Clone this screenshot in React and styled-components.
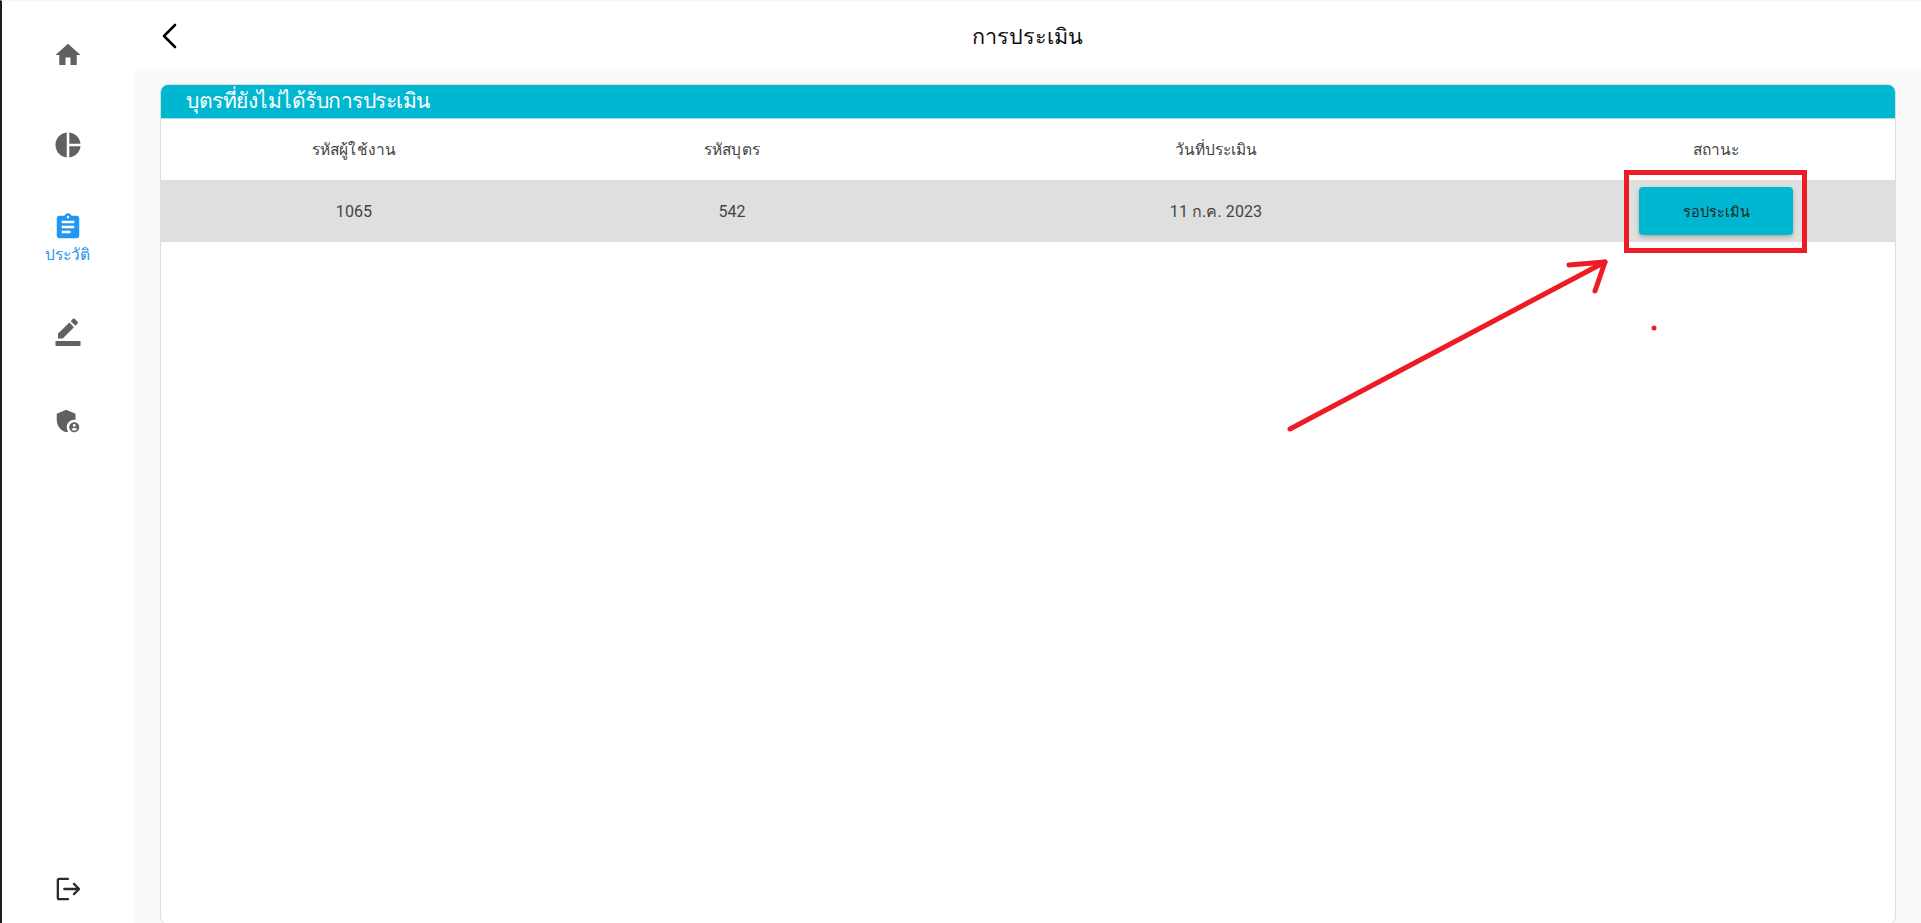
import React from 'react'
import styled, { createGlobalStyle } from 'styled-components'
import {
  MdHome,
  MdPieChart,
  MdAssignment,
  MdBorderColor,
  MdAdminPanelSettings,
} from 'react-icons/md'

const GlobalStyle = createGlobalStyle`
  html, body {
    margin: 0;
    padding: 0;
    height: 100%;
    overflow: hidden;
    background: #fff;
    font-family: Roboto, "Noto Sans", sans-serif;
  }
`

const Page = styled.div`
  position: relative;
  display: flex;
  box-sizing: border-box;
  height: 923px;
  border-left: 2px solid #1c1c1c;
  border-top: 1px solid #f6f6f6;
  overflow: hidden;
`

const Sidebar = styled.nav`
  width: 133px;
  flex-shrink: 0;
  display: flex;
  flex-direction: column;
  padding: 9px 2px 0 0;
  box-sizing: border-box;
  background: #fff;
`

const NavItem = styled.div`
  box-sizing: border-box;
  height: ${(p) => (p.$active ? '96px' : '90px')};
  padding-top: ${(p) => (p.$active ? '2px' : '0')};
  display: flex;
  flex-direction: column;
  align-items: center;
  justify-content: center;
  color: ${(p) => (p.$active ? '#2196f3' : '#616161')};
`

const NavLabel = styled.span`
  margin-top: 1px;
  font-size: 15.500px;
  font-weight: 300;
  line-height: 24px;
`

const LogoutItem = styled.div`
  margin-top: auto;
  height: 46px;
  display: flex;
  justify-content: center;
  color: #2b2b2b;
`

const Main = styled.div`
  flex: 1;
  min-width: 0;
  display: flex;
  flex-direction: column;
`

const Header = styled.header`
  height: 70px;
  flex-shrink: 0;
  display: grid;
  grid-template-columns: 1fr auto 1fr;
  align-items: center;
  background: #fff;
`

const BackButton = styled.button`
  justify-self: start;
  margin-left: 26px;
  padding: 0;
  border: 0;
  background: none;
  display: flex;
  color: #000;
`

const Title = styled.h1`
  margin: 0 2px 0 0;
  font-size: 21.600px;
  font-weight: 300;
  color: #111;
`

const Content = styled.main`
  flex: 1;
  min-height: 0;
  display: flex;
  flex-direction: column;
  padding: 13px 25px 0;
  background: #fafafa;
`

const Card = styled.section`
  flex: 1;
  margin-bottom: -2px;
  border: 1px solid #dcdcdc;
  border-radius: 8px;
  background: #fff;
  overflow: hidden;
`

const CardTitle = styled.div`
  height: 33px;
  padding-left: 25px;
  background: #00b7d1;
  border-bottom: 1px solid #9fe0ea;
  color: #fff;
  font-size: 21px;
  font-weight: 300;
  letter-spacing: -0.5px;
  line-height: 32px;
`

const Row = styled.div`
  display: grid;
  grid-template-columns: 386px 370px 598px 1fr;
  align-items: center;
  height: ${(p) => (p.$head ? '61px' : '62px')};
  background: ${(p) => (p.$shaded ? '#dfdfdf' : '#fff')};
  color: #444;
  font-size: ${(p) => (p.$head ? '15.500px' : '16px')};
  font-weight: ${(p) => (p.$head ? 300 : 400)};
  letter-spacing: 0.005em;
`

const Cell = styled.div`
  text-align: center;
  &:last-child {
    padding-left: 22px;
  }
`

const StatusButton = styled.button`
  width: 154px;
  height: 48px;
  border: 0;
  border-radius: 4px;
  background: #00b7d1;
  color: #222;
  font-family: inherit;
  font-size: 14.500px;
  font-weight: 300;
  box-shadow: 0 2px 4px rgba(0, 0, 0, 0.25);
`

const RedBox = styled.div`
  position: absolute;
  left: 1622px;
  top: 169px;
  width: 183px;
  height: 83px;
  box-sizing: border-box;
  border: 5px solid #ed1c24;
`

const Scribble = styled.svg`
  position: absolute;
  left: -2px;
  top: -1px;
  pointer-events: none;
`

export default function App() {
  return (
    <>
      <GlobalStyle />
      <Page>
        <Sidebar>
          <NavItem>
            <MdHome size={30} />
          </NavItem>
          <NavItem>
            <MdPieChart size={30} />
          </NavItem>
          <NavItem $active>
            <MdAssignment size={30} />
            <NavLabel>ประวัติ</NavLabel>
          </NavItem>
          <NavItem>
            <MdBorderColor size={30} />
          </NavItem>
          <NavItem>
            <MdAdminPanelSettings size={30} />
          </NavItem>
          <LogoutItem>
            <svg width="24" height="24" viewBox="0 0 26 26" fill="none" stroke="currentColor" strokeWidth="2.500" strokeLinecap="round" strokeLinejoin="round">
              <path d="M13 2H3.500a1.500 1.500 0 0 0-1.500 1.500v19A1.500 1.500 0 0 0 3.500 24H13" />
              <path d="M9 13h16M19.500 7.500 25 13l-5.500 5.500" />
            </svg>
          </LogoutItem>
        </Sidebar>
        <Main>
          <Header>
            <BackButton>
              <svg width="16" height="26" viewBox="0 0 16 26" fill="none" stroke="currentColor" strokeWidth="2.600" strokeLinecap="round" strokeLinejoin="round">
                <path d="M14 2 3 13l11 11" />
              </svg>
            </BackButton>
            <Title>การประเมิน</Title>
          </Header>
          <Content>
            <Card>
              <CardTitle>บุตรที่ยังไม่ได้รับการประเมิน</CardTitle>
              <Row $head>
                <Cell>รหัสผู้ใช้งาน</Cell>
                <Cell>รหัสบุตร</Cell>
                <Cell>วันที่ประเมิน</Cell>
                <Cell>สถานะ</Cell>
              </Row>
              <Row $shaded>
                <Cell>1065</Cell>
                <Cell>542</Cell>
                <Cell>11 ก.ค. 2023</Cell>
                <Cell>
                  <StatusButton>รอประเมิน</StatusButton>
                </Cell>
              </Row>
            </Card>
          </Content>
        </Main>
        <RedBox />
        <Scribble width="1921" height="923" viewBox="0 0 1921 923" fill="none" stroke="#ed1c24" strokeWidth="5" strokeLinecap="round" strokeLinejoin="round">
          <path d="M1290 429 1605 262" />
          <path d="M1569 265 1605 262 1595 291" />
          <circle cx="1654" cy="328" r="2.500" fill="#ed1c24" stroke="none" />
        </Scribble>
      </Page>
    </>
  )
}
